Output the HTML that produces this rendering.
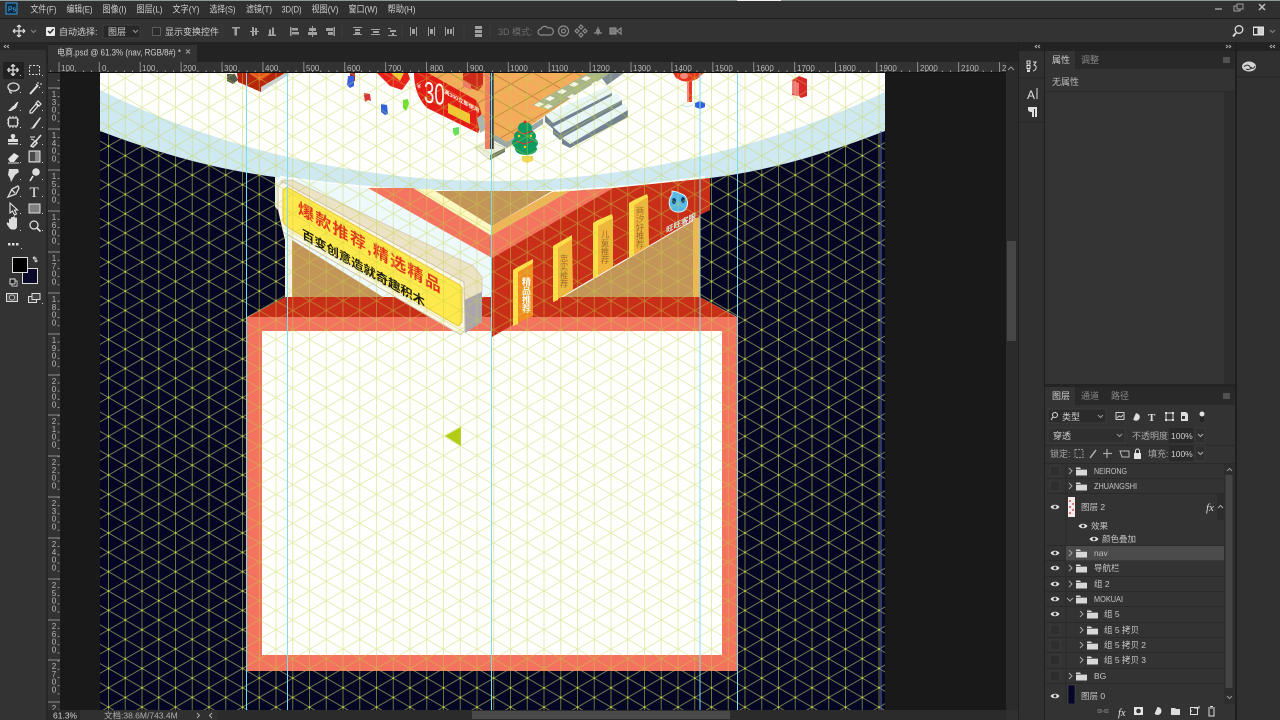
<!DOCTYPE html>
<html lang="zh"><head><meta charset="utf-8"><title>电商.psd</title>
<style>
html,body{margin:0;padding:0;background:#323232;width:1280px;height:720px;overflow:hidden}
svg{display:block;position:absolute;left:0;top:0}
text{font-family:"Liberation Sans","Noto Sans CJK SC",sans-serif;font-size:9px;fill:#cfcfcf}
.m text{font-size:9.5px;fill:#cfcfcf}
.r text{font-size:8px;fill:#b8b8b8}
.l text{font-size:8.5px;fill:#c6c6c6}
.ic{fill:none;stroke:#dcdcdc;stroke-width:1.3}
.fi{fill:#dcdcdc}
.dim{fill:none;stroke:#8c8c8c;stroke-width:1.2}
.al{fill:#a0a0a0}
</style></head><body>
<svg width="1280" height="720" viewBox="0 0 1280 720" xmlns="http://www.w3.org/2000/svg">
<defs>
<pattern id="grid" patternUnits="userSpaceOnUse" width="33.5" height="19.35" patternTransform="translate(108.5 146)">
<path d="M0 0V19.35M16.75 0V19.35M0 0L33.5 19.35M0 19.35L33.5 0M33.5 0V19.35" fill="none" stroke="#c4d444" stroke-width=".95" opacity=".45"/>
</pattern>
<pattern id="gridD" patternUnits="userSpaceOnUse" width="33.5" height="19.35" patternTransform="translate(108.5 146)">
<path d="M0 0L33.5 19.35M0 19.35L33.5 0" fill="none" stroke="#7f8852" stroke-width=".9"/>
<path d="M0 0V19.35M16.75 0V19.35M33.5 0V19.35" fill="none" stroke="#667538" stroke-width="1"/>
<circle cx="16.75" cy="9.67" r="1" fill="#c4d830"/><circle cx="0" cy="0" r="1" fill="#c4d830"/><circle cx="33.5" cy="0" r="1" fill="#c4d830"/><circle cx="0" cy="19.35" r="1" fill="#c4d830"/><circle cx="33.5" cy="19.35" r="1" fill="#c4d830"/>
</pattern>
<pattern id="tile" patternUnits="userSpaceOnUse" width="42" height="24" patternTransform="translate(490 120)">
<path d="M0 0L42 24M0 24L42 0" fill="none" stroke="#c98a3e" stroke-width="1"/>
</pattern>
<pattern id="tickH" patternUnits="userSpaceOnUse" width="8.18" height="10" patternTransform="translate(99.3 62)">
<rect x="0" y="8.6" width="1" height="1.4" fill="#a8a8a8"/>
</pattern>
<pattern id="tickV" patternUnits="userSpaceOnUse" width="12" height="8.18" patternTransform="translate(48 88)">
<rect x="9.8" y="0" width="1.6" height="1" fill="#a8a8a8"/>
</pattern>
<clipPath id="cv"><rect x="100" y="73" width="785" height="637"/></clipPath>
<g id="folder"><path d="M0 1.5h4l1 1.5h6v6.500h-11z" fill="#d8d8d8"/><rect x="0" y="3" width="11" height="1" fill="#6e6e6e"/></g>
<g id="chev"><path d="M0 0l3 3-3 3" fill="none" stroke="#a8a8a8" stroke-width="1"/></g>
<g id="eye"><path d="M-4.500 0C-2.500-3 2.500-3 4.500 0 2.500 3-2.500 3-4.500 0z" fill="#e6e6e6"/><circle r="1.500" fill="#2d2d2d"/></g>
<rect id="nobox" x="-5" y="-5" width="10" height="10" fill="#2e2e2e" stroke="#3b3b3b"/>
</defs>

<!-- shell -->
<rect width="1280" height="720" fill="#323232"/>
<rect width="1280" height="1" fill="#8f9a9c"/>
<rect x="737" width="44" height="1" fill="#f0f0f0"/>
<rect y="1" width="1280" height="17" fill="#303030"/>
<rect y="18" width="1280" height="1" fill="#1e1e1e"/>
<rect y="19" width="1280" height="23" fill="#333"/>
<rect y="42" width="1280" height="20" fill="#232323"/>
<rect x="48" y="45" width="149" height="17" fill="#333"/>
<rect x="0" y="42" width="46" height="678" fill="#333"/>
<rect x="0" y="42" width="48" height="8" fill="#262626"/>
<rect x="46" y="62" width="2" height="658" fill="#262626"/>

<!-- title -->
<rect x="6" y="3" width="11" height="11" fill="#0a2a44" stroke="#3e9bd8"/>
<text x="8" y="11.500" style="font-size:7px;fill:#55b5f0">Ps</text>
<g class="m">
<text x="30.500" y="12.500" textLength="26" lengthAdjust="spacingAndGlyphs">文件(F)</text><text x="66.500" y="12.500" textLength="26" lengthAdjust="spacingAndGlyphs">编辑(E)</text><text x="102.500" y="12.500" textLength="24" lengthAdjust="spacingAndGlyphs">图像(I)</text><text x="136.500" y="12.500" textLength="26" lengthAdjust="spacingAndGlyphs">图层(L)</text><text x="172.500" y="12.500" textLength="27" lengthAdjust="spacingAndGlyphs">文字(Y)</text><text x="209.500" y="12.500" textLength="26" lengthAdjust="spacingAndGlyphs">选择(S)</text><text x="246" y="12.500" textLength="26" lengthAdjust="spacingAndGlyphs">滤镜(T)</text><text x="281.500" y="12.500" textLength="20" lengthAdjust="spacingAndGlyphs">3D(D)</text><text x="311.500" y="12.500" textLength="27" lengthAdjust="spacingAndGlyphs">视图(V)</text><text x="348.500" y="12.500" textLength="29" lengthAdjust="spacingAndGlyphs">窗口(W)</text><text x="387.500" y="12.500" textLength="28" lengthAdjust="spacingAndGlyphs">帮助(H)</text>
</g>
<path d="M1215 9h7" stroke="#9a9a9a" stroke-width="1.500"/>
<rect x="1234" y="6" width="6" height="5" fill="none" stroke="#a0a0a0"/><rect x="1237" y="4" width="6" height="5" fill="#303030" stroke="#a0a0a0"/>
<path d="M1259 4l6 6M1265 4l-6 6" stroke="#bdbdbd" stroke-width="1.500"/>

<!-- options bar -->
<path d="M19 25v12M13 31h12M19 25l-2 2M19 25l2 2M19 37l-2-2M19 37l2-2M13 31l2-2M13 31l2 2M25 31l-2-2M25 31l-2 2" stroke="#e4e4e4" stroke-width="1.200" fill="none"/>
<path d="M31 30l2.500 2.500 2.500-2.500" stroke="#8a8a8a" fill="none"/>
<rect x="46" y="27" width="9" height="9" rx="1" fill="#ececec"/><path d="M48 31l2 2 3.500-4" stroke="#222" stroke-width="1.400" fill="none"/>
<text x="59" y="35">自动选择:</text>
<rect x="103" y="25" width="37" height="13" fill="#282828" stroke="#3c3c3c"/>
<text x="108" y="35">图层</text>
<path d="M133 30l2.500 2.500 2.500-2.500" stroke="#9a9a9a" fill="none"/>
<rect x="152.500" y="27.500" width="8" height="8" fill="#2b2b2b" stroke="#5a5a5a"/>
<text x="165" y="35">显示变换控件</text>
<g class="al">
<path d="M232 27h8v1.500h-3v7h-2.500v-7h-2.500z"/><path d="M250 31h9v1h-9zM252 27h2v9h-2zM255 28h2v7h-2z"/><path d="M268 36h8v-1.500h-2v-7h-2v7h-1v-5h-2v5h-1z"/>
<path d="M290 27h1.500v9H290zM292 28h6v2.500h-6zM292 32h7v2.500h-7z"/><path d="M312 26h1v11h-1zM309 28h7v3h-7zM308 32h9v3h-9z"/><path d="M335 27v9h-1.500v-9zM326 28h7v3h-7zM328 32h5v3h-5z"/>
<path d="M353 27h9v1h-9zM355 29h5v2h-5zM353 34h9v1h-9zM355 32h5v2h-5z"/><path d="M371 29h9v1h-9zM373 31h6v2h-6zM371 34h9v1h-9z"/><path d="M388 35h9v1h-9zM390 30h6v2h-6zM388 28h3v1h-3zM392 33h2v2h-2z"/>
<path d="M410 27h1v9h-1zM416 27h1v9h-1zM412 29h3v5h-3z"/><path d="M428 27h1v9h-1zM434 27h1v9h-1zM430 29h3v5h-3z"/><path d="M445 27h1v9h-1zM453 27h1v9h-1zM447 29h2v5h-2zM450 29h2v5h-2z"/>
<rect x="475" y="26" width="7" height="3"/><rect x="475" y="30" width="7" height="3"/><rect x="475" y="34" width="7" height="3"/>
</g>
<path d="M222 24v14M342 24v14M402 24v14M464 24v14M490 24v14" stroke="#3e3e3e"/>
<text x="498" y="35" style="fill:#6e6e6e">3D 模式:</text>
<g class="dim" stroke="#7a7a7a">
<path d="M541 35a3 3 0 0 1 0-6 4 4 0 0 1 7-1 3.500 3.500 0 0 1 3 7z"/><circle cx="563.500" cy="31" r="5"/><circle cx="563.500" cy="31" r="2"/>
<path d="M581 25l2 2-2 2-2-2zM581 33l2 2-2 2-2-2zM575 31l2-2 2 2-2 2zM587 31l-2-2-2 2 2 2z"/>
<path d="M598 27v8M594 33h8"/><circle cx="598" cy="31" r="1.500"/>
<rect x="610" y="28" width="6" height="6" fill="#7a7a7a"/><path d="M617 31l4-3v6z"/>
</g>
<circle cx="1239" cy="29.500" r="3.800" class="ic" stroke-width="1.500"/><path d="M1236 33l-3 3.500" stroke="#e0e0e0" stroke-width="1.800"/>
<rect x="1253" y="26.500" width="11" height="9" fill="#e0e0e0"/><rect x="1254" y="28" width="3.500" height="6" fill="#2e2e2e"/><rect x="1258.500" y="28" width="4.500" height="6" fill="#d0d0d0"/>
<path d="M1270 30l2.500 2.500 2.500-2.500" stroke="#8a8a8a" fill="none"/>
<path d="M6 45l-2 1.500 2 1.500M9 45l-2 1.500 2 1.500M1037 45l-2 1.500 2 1.500M1040 45l-2 1.500 2 1.500M1226 45l2 1.500-2 1.500M1229 45l2 1.500-2 1.500M1272 45l-2 1.500 2 1.500M1275 45l-2 1.500 2 1.500" stroke="#bbb" fill="none" stroke-width=".8"/>

<!-- doc tab -->
<text x="57" y="55.500" textLength="124" lengthAdjust="spacingAndGlyphs" style="font-size:9px;fill:#d0d0d0">电商.psd @ 61.3% (nav, RGB/8#) *</text>
<path d="M186 49.500l4 4M190 49.500l-4 4" stroke="#a0a0a0"/>

<!-- gutter -->
<rect x="60" y="73" width="946" height="637" fill="#191919"/>

<!-- canvas -->
<g clip-path="url(#cv)">
<rect x="100" y="73" width="785" height="637" fill="#fff"/>
<path d="M100 90C210 145 350 181 492 181C635 181 775 145 885 92V131C775 172 635 191 492 191C350 191 210 172 100 131z" fill="#cfe9f2"/>
<path d="M100 120V142L280 186V165zM885 120V142L705 186V165z" fill="#cfe9f2"/>

<!-- top props -->
<path d="M227 74h8l3 6-5 4-6-3z" fill="#55584a"/>
<path d="M237 73H287L261 92 238 82z" fill="#b8240c"/>
<path d="M249 73H272L260 81z" fill="#e6541c"/>
<path d="M261 92L287 76 290 74 285 73 261 87z" fill="#c8d2d4"/>
<path d="M350 73h5v8h-5z" fill="#a82838"/><path d="M348 76h6v10l-4 2-3-3z" fill="#3a62e0"/>
<path d="M364 93l6 1 1 7-3-1-3 2-1-6z" fill="#d83838"/>
<path d="M381 104l6 1 1 9-3 1-4-3z" fill="#2f62d8"/>
<path d="M403 100l5-1 1 5-3 7-3-3z" fill="#6ce030"/>
<path d="M453 128l6-1v7l-4 2-2-3z" fill="#62e060"/>
<!-- floor -->
<path d="M428 73H607L543 117 507 142 487 130 482 118z" fill="#f4ac5c"/>
<path d="M428 73H607L543 117 507 142 487 130 482 118z" fill="url(#tile)"/>
<path d="M487 130L507 142 543 118 543 124 507 148 487 137z" fill="#98a4a8"/>
<path d="M600 76l10-3h14l-17 12z" fill="#7f8d96"/>
<path d="M588 73H610L603 78 550 110 532 105z" fill="#a9b58c"/>
<path d="M586 76l5 2-5 3-5-2zM574 82l5 2-5 3-5-2zM562 89l5 2-5 3-5-2zM550 96l5 2-5 3-5-2zM539 102l5 2-5 3-5-2zM596 81l5 2-5 3-5-2zM572 94l5 2-5 3-5-2zM548 104l5 2-5 3-5-2z" fill="#f8f8ea"/>
<path d="M545 115L610 85 612 93 553 123z" fill="#e8f6f8"/><path d="M545 115L553 123 612 93 612 98 553 129 545 122z" fill="#728290"/>
<path d="M553 127L617 93 622 100 560 133z" fill="#e8f6f8"/><path d="M553 127L560 133 622 100 622 106 560 140 553 134z" fill="#728290"/>
<path d="M562 138L625 103 628 110 570 144z" fill="#e8f6f8"/><path d="M562 138L570 144 628 110 628 117 570 148 562 144z" fill="#728290"/>
<!-- hanging red -->
<path d="M377 73H408L410 79 402 90 390 86z" fill="#e8201c"/><path d="M391 73h13l-4 8z" fill="#f6c83a"/>
<path d="M414 73H428L476 100Q486 115 478 133L427 108Q414 95 414 73z" fill="#e41b17"/>
<path d="M463 73h20v12l-5 6-15-6z" fill="#cf2a1c"/><path d="M463 80l8 5v5l-8-4z" fill="#f07a68"/>
<text transform="matrix(.62 .1 0 1 424 102)" style="font-size:30px;fill:#fff">30</text>
<text transform="matrix(1 .2 0 1 417 88)" style="font-size:7px;fill:#fff">¥</text>
<text transform="matrix(1 .56 0 1 444 93)" style="font-size:5.300px;fill:#ffe;font-weight:700">满300立即使用</text>
<path d="M448 103L470 114V124L448 113z" fill="#f4c832"/>
<path d="M477 118l5-4 5 15-7 4z" fill="#a8b6b6"/>
<!-- pole -->
<path d="M475 148L490 141 505 148 490 160z" fill="#eceee0" stroke="#d2d8b0"/><path d="M490 155V160L505 152V148z" fill="#6d7a68"/>
<rect x="485" y="73" width="5" height="76" fill="#f07d60"/><rect x="490" y="73" width="4" height="76" fill="#3a3842"/>
<!-- tree -->
<g fill="#0f9a60"><ellipse cx="525" cy="128" rx="7" ry="6"/><ellipse cx="525" cy="136" rx="11" ry="7"/><ellipse cx="525" cy="143" rx="13" ry="7"/><ellipse cx="526" cy="149" rx="11" ry="6"/></g>
<path d="M522 156h11v5l-6 2-5-2z" fill="#f4d858"/>
<path d="M517 131l7 3 8-3M516 141l8 3 9-3" fill="none" stroke="#d83038"/>
<circle cx="525" cy="122" r="1.500" fill="#e03030"/><circle cx="519" cy="136" r="1.200" fill="#f4d020"/><circle cx="531" cy="136" r="1.200" fill="#f4d020"/><circle cx="525" cy="147" r="1.200" fill="#f4d020"/>
<!-- lantern -->
<path d="M673 73h31l-7 6-8 3-7-1-6-3z" fill="#e8341c"/><ellipse cx="684" cy="76" rx="4" ry="3" fill="#f08a7c"/>
<rect x="687" y="81" width="5" height="21" fill="#e83828"/><rect x="687" y="81" width="2" height="21" fill="#f28878"/>
<path d="M695 103l5-2 5 2v4l-5 2-5-2z" fill="#2e62e0"/><path d="M681 105q6 3 12 0" stroke="#bde8e8" fill="none"/>
<!-- red box -->
<path d="M792 80l7-4 8 3v17l-6 2-2-2-7-1z" fill="#d82828"/><path d="M792 80l7 3v13l-7-2z" fill="#f07878"/>

<!-- building -->
<path d="M275 177L368 188 430 190 492 237V338L285 298V215L275 207z" fill="#edf9fc"/>
<path d="M292 240L383 297H292z" fill="#c49559"/>
<path d="M285 205h7v92h-7z" fill="#f5f2e2"/>
<!-- brown top -->
<path d="M432 191H552L492 226z" fill="#c49559"/>
<path d="M413 189H432L492 226V236z" fill="#fdf7c2"/>
<path d="M368 188H413L492 236V258z" fill="#f4745f"/>
<path d="M492 226L552 192 570 191 492 235z" fill="#f0b458"/>
<path d="M492 235L570 191 613 188 492 258z" fill="#f4745f"/>
<!-- below wall -->
<path d="M563 297L693 221 700 215V297z" fill="#c49559"/>
<path d="M693 218h7v79h-7z" fill="#f0b458"/>
<!-- frame -->
<rect x="247" y="317" width="490" height="354" fill="#f4735e"/>
<path d="M285 297H700L737 317.500H247z" fill="#c92f18"/>
<rect x="262" y="331" width="460" height="324" fill="#fff"/>
<path d="M247 317H737V318H247z" fill="#f4735e"/>
<!-- wall -->
<path d="M492 258L613 188 710 178V210L492 337z" fill="#c92f18"/>
<!-- wall signs -->
<path d="M513 270L533 263 533 316 513 325z" fill="#f08d20"/><path d="M513 270L518 267 533 259 533 263 518 272V324L513 326z" fill="#ffe04a"/>
<path d="M553 246L572 238 573 290 553 302z" fill="#f2b43a"/><path d="M553 246L558 243 572 235 572 239 558 248V300L553 302z" fill="#ffe04a"/>
<path d="M593 223L613 217 613 267 593 278z" fill="#f2b43a"/><path d="M593 223L598 220 612 214 613 218 598 226V276L593 279z" fill="#ffe04a"/>
<path d="M629 203L648 196 649 246 629 258z" fill="#f2b43a"/><path d="M629 203L634 200 647 194 648 197 634 205V255L629 258z" fill="#ffe04a"/>
<text x="526" y="277" style="font-size:9px;fill:#fff;writing-mode:vertical-rl;font-weight:700">精品推荐</text>
<text x="564" y="254" style="font-size:8.500px;fill:#9c6a26;writing-mode:vertical-rl">忠实推荐</text>
<text x="605" y="230" style="font-size:8.500px;fill:#9c6a26;writing-mode:vertical-rl">儿童推荐</text>
<text x="640" y="206" style="font-size:8.500px;fill:#9c6a26;writing-mode:vertical-rl">商汐好推荐</text>
<!-- mascot -->
<path d="M672 191l5 1 7 3c4 4 5 10 1 15-4 3-11 3-14-1-3-5-2-11 1-14z" fill="#54b8ec" stroke="#dff3fb"/>
<ellipse cx="674" cy="201" rx="2" ry="3" fill="#113d6b"/><ellipse cx="683" cy="200" rx="2" ry="3" fill="#113d6b"/>
<text transform="matrix(1 -.5 0 1 666 233)" style="font-size:7.500px;fill:#d8f0f8;font-weight:700">旺旺客服</text>

<!-- signboard -->
<path d="M281 181L292 180 473 266 482 277V292L465 300 462 283 285 186z" fill="#ece3c6" stroke="#d9cfb8" stroke-linejoin="round"/>
<path d="M465 300L482 292V322L465 333z" fill="#aba6ab"/>
<path d="M283 182L464 282 465 330 461 335 283 232 278 224V186z" fill="#fbf8e6" stroke="#cfc4b0" stroke-linejoin="round"/>
<path d="M287 187L460 285 462 288V322L458 326 287 227 283 222V190z" fill="#ffe94c" stroke="#e7c343" stroke-linejoin="round"/>
<text transform="matrix(1 .56 0 1 298 213)" style="font-size:16px;font-weight:700;fill:#e2361a;letter-spacing:1.300px">爆款推荐,精选精品</text>
<text transform="matrix(1 .56 0 1 302 238)" style="font-size:12.300px;font-weight:700;fill:#1a1a10">百变创意造就奇趣积木</text>

<!-- arrow -->
<path d="M445 436L461 427V446z" fill="#b4cc16"/>

<!-- light grid -->
<rect x="100" y="73" width="785" height="637" fill="url(#grid)"/>
<!-- dark background + dark grid -->
<path d="M100 131C160 154 218 170 275 177V207L278 210 283 232 285 240V297L247 317V671H737V317L700 297V215L710 210V178C768 171 826 154 885 131V710H100z" fill="#050524"/>
<path d="M100 131C160 154 218 170 275 177V207L278 210 283 232 285 240V297L247 317V671H737V317L700 297V215L710 210V178C768 171 826 154 885 131V710H100z" fill="url(#gridD)"/>
<path d="M246.500 73V710M287.500 73V710M491.500 73V710M700 73V710M737.500 73V710" stroke="#7fdcec" stroke-width="1"/>
<path d="M881 131V710" stroke="#5a6ca8" stroke-width="1"/>
</g>

<!-- rulers -->
<rect x="48" y="62" width="958" height="11" fill="#323232"/>
<rect x="48" y="62" width="958" height="10" fill="url(#tickH)"/>
<rect x="48" y="72" width="958" height="1" fill="#111"/>
<path d="M59 62v10M99.300 62v10M140.200 62v10M181.100 62v10M222 62v10M262.900 62v10M303.800 62v10M344.700 62v10M385.600 62v10M426.500 62v10M467.400 62v10M508.300 62v10M549.200 62v10M590.100 62v10M631 62v10M671.900 62v10M712.800 62v10M753.700 62v10M794.600 62v10M835.500 62v10M876.700 62v10M917.600 62v10M958.600 62v10M999.500 62v10" stroke="#8c8c8c"/>
<g class="r">
<text x="61" y="71">100</text><text x="102" y="71">0</text><text x="142" y="71">100</text><text x="183" y="71">200</text><text x="224" y="71">300</text><text x="265" y="71">400</text><text x="306" y="71">500</text><text x="347" y="71">600</text><text x="388" y="71">700</text><text x="430" y="71" >800</text><text x="470" y="71">900</text><text x="510" y="71">1000</text><text x="551" y="71">1100</text><text x="592" y="71">1200</text><text x="633" y="71">1300</text><text x="674" y="71">1400</text><text x="715" y="71">1500</text><text x="756" y="71">1600</text><text x="797" y="71">1700</text><text x="838" y="71">1800</text><text x="879" y="71">1900</text><text x="920" y="71">2000</text><text x="961" y="71">2100</text><text x="1002" y="71">2</text>
</g>
<rect x="48" y="73" width="12" height="637" fill="#323232"/>
<rect x="48" y="73" width="12" height="637" fill="url(#tickV)"/>
<path d="M48 88h12M48 129h12M48 170h12M48 211h12M48 252h12M48 293h12M48 334h12M48 375h12M48 415h12M48 456h12M48 497h12M48 538h12M48 579h12M48 620h12M48 660h12M48 702h12" stroke="#8c8c8c"/>
<g class="r" style="writing-mode:vertical-rl;text-orientation:upright">
<text x="54" y="90" style="letter-spacing:-1.200px">1300</text><text x="54" y="131" style="letter-spacing:-1.200px">1400</text><text x="54" y="172" style="letter-spacing:-1.200px">1500</text><text x="54" y="213" style="letter-spacing:-1.200px">1600</text><text x="54" y="254" style="letter-spacing:-1.200px">1700</text><text x="54" y="295" style="letter-spacing:-1.200px">1800</text><text x="54" y="336" style="letter-spacing:-1.200px">1900</text><text x="54" y="377" style="letter-spacing:-1.200px">2000</text><text x="54" y="417" style="letter-spacing:-1.200px">2100</text><text x="54" y="458" style="letter-spacing:-1.200px">2200</text><text x="54" y="499" style="letter-spacing:-1.200px">2300</text><text x="54" y="540" style="letter-spacing:-1.200px">2400</text><text x="54" y="581" style="letter-spacing:-1.200px">2500</text><text x="54" y="622" style="letter-spacing:-1.200px">2600</text><text x="54" y="662" style="letter-spacing:-1.200px">2700</text><text x="54" y="704" style="letter-spacing:-1.200px">2</text>
</g>

<!-- toolbar -->
<rect x="3" y="62" width="21" height="17" fill="#212121"/>
<path d="M13 64.500v11M7.500 70h11M13 64.500l-2 2M13 64.500l2 2M13 75.500l-2-2M13 75.500l2-2M7.500 70l2-2M7.500 70l2 2M18.500 70l-2-2M18.500 70l-2 2" class="ic"/>
<rect x="29.500" y="65.500" width="10" height="9" fill="none" stroke="#dcdcdc" stroke-dasharray="2 1.500"/>
<ellipse cx="13.500" cy="87" rx="5.500" ry="4" class="ic"/><path d="M10 90q-1 3 2 3" class="ic"/>
<path d="M30 94l8-9" stroke="#e4e4e4" stroke-width="2"/><path d="M38 82v2M40 84h2M36 84l1 1M39 87l1 1" stroke="#e4e4e4"/>
<path d="M8 111l5-5 5-3-2 5-5 3z" class="fi"/><path d="M18 102l-3 3" stroke="#fff"/>
<path d="M30 111l6-7 2 2-6 7-2 0zM36 103l2-2 3 3-2 2z" fill="none" stroke="#e4e4e4" stroke-width="1.200"/>
<rect x="8.500" y="118" width="9" height="8" rx="1" class="ic"/><path d="M10 116v2M13 116v2M16 116v2M10 126v2M13 126v2M16 126v2M7 120h1M7 123h1M18 120h1M18 123h1" stroke="#dcdcdc"/>
<path d="M30 128c2 0 3-1 3-2l7-9 1 1-6 9c-1 2-3 2-5 1z" class="fi"/>
<path d="M13 134a2 2 0 0 1 2 3l-1 2h4v3H8v-3h4l-1-2a2 2 0 0 1 2-3zM8 143h10v1.500H8z" class="fi"/>
<path d="M31 146l4-5 2 2-4 4zM36 141l5-6" stroke="#e4e4e4" stroke-width="1.500" fill="none"/><path d="M30 137h5M31 139l3 1" stroke="#e4e4e4"/>
<path d="M8 159l6-6 5 3-5 6H10z" fill="#e4e4e4"/><path d="M8 163h11" stroke="#ddd"/>
<rect x="29" y="151" width="11" height="11" fill="#8a8a8a" stroke="#ddd"/><rect x="30" y="152" width="5" height="9" fill="#333" opacity=".75"/>
<path d="M9 169h9l1 3-4 3-4 7-1-4-2-3z" class="fi"/>
<circle cx="36" cy="172" r="3.800" class="fi"/><path d="M33 176l-3 5" stroke="#e4e4e4" stroke-width="1.600"/>
<path d="M8 197l4-8 6-3 1 2-3 6-8 3zM12 190l3 3" class="ic"/>
<text x="29.500" y="197" style="font-family:'Liberation Serif',serif;font-size:15px;fill:#eee">T</text>
<path d="M10 203l0 10 2.500-2 2 4 2-1-2-4h3z" fill="none" stroke="#e4e4e4" stroke-width="1.100"/>
<rect x="29" y="204" width="11" height="9" fill="#7f7f7f" stroke="#ddd"/>
<path d="M9 224v-4c0-2 2-2 2 0v-2c0-1.500 2-1.500 2 0v-.500c0-1.500 2-1.500 2 0v1c0-1.500 2-1.500 2 0v7c0 3-1 4-3 4h-2c-2 0-3-2-5-5-1-2 1-3 2-1z" class="fi"/>
<circle cx="34" cy="225" r="4" class="ic"/><path d="M37 228l3.500 3.500" stroke="#e4e4e4" stroke-width="1.600"/>
<path d="M8 243h2.500v2.500H8zM12 243h2.500v2.500H12zM16 243h2.500v2.500H16z" fill="#ddd"/>
<g fill="#cfcfcf"><rect x="20" y="75" width="1" height="1"/><rect x="42" y="75" width="1" height="1"/><rect x="20" y="92" width="1" height="1"/><rect x="42" y="92" width="1" height="1"/><rect x="20" y="110" width="1" height="1"/><rect x="42" y="110" width="1" height="1"/><rect x="20" y="127" width="1" height="1"/><rect x="42" y="127" width="1" height="1"/><rect x="20" y="144" width="1" height="1"/><rect x="42" y="144" width="1" height="1"/><rect x="20" y="162" width="1" height="1"/><rect x="42" y="162" width="1" height="1"/><rect x="20" y="179" width="1" height="1"/><rect x="42" y="179" width="1" height="1"/><rect x="20" y="196" width="1" height="1"/><rect x="42" y="196" width="1" height="1"/><rect x="20" y="213" width="1" height="1"/><rect x="42" y="213" width="1" height="1"/><rect x="20" y="230" width="1" height="1"/><rect x="42" y="230" width="1" height="1"/><rect x="21" y="248" width="1" height="1"/><rect x="42" y="303" width="1" height="1"/></g>
<rect x="22.500" y="268.500" width="15" height="15" fill="#0a0a28" stroke="#dcdcdc"/>
<rect x="12.500" y="257.500" width="15" height="15" fill="#000" stroke="#dcdcdc"/>
<path d="M33 258h3v4M33 258l1.500-1.500M33 258l1.500 1.500M36 262l-1.500-1.500M36 262l1.500-1.500" stroke="#ddd" fill="none"/>
<rect x="12" y="281" width="5" height="5" fill="#000" stroke="#ccc"/><rect x="10" y="279" width="5" height="5" fill="#222" stroke="#ddd"/>
<rect x="6.500" y="293.500" width="11" height="8" fill="#555" stroke="#ddd"/><circle cx="12" cy="297.500" r="2.500" fill="#333" stroke="#bbb"/>
<rect x="28.500" y="296.500" width="8" height="6" fill="#444" stroke="#ddd"/><rect x="32" y="293.500" width="8" height="6" fill="#444" stroke="#ddd"/>

<!-- scrollbars + status -->
<rect x="1006" y="62" width="12" height="658" fill="#2b2b2b"/>
<path d="M1008 70l3-3 3 3" stroke="#999" fill="none"/>
<rect x="1007" y="241" width="9" height="100" fill="#474747"/>
<rect x="48" y="710" width="970" height="10" fill="#303030"/>
<rect x="48" y="710" width="32" height="10" fill="#2a2a2a"/>
<text x="53" y="718.500" style="font-size:8.500px;fill:#d4d4d4">61.3%</text>
<text x="104" y="718.500" style="font-size:8.500px;fill:#b0b0b0">文档:38.6M/743.4M</text>
<path d="M197 713l2.500 2.500-2.500 2.500M212 713l-2.500 2.500 2.500 2.500" stroke="#aaa" fill="none"/>
<rect x="218" y="710" width="788" height="10" fill="#2b2b2b"/>
<rect x="472" y="711" width="258" height="8" fill="#4a4a4a"/>

<!-- dock -->
<rect x="1018" y="42" width="1" height="678" fill="#1f1f1f"/>
<rect x="1019" y="51" width="25" height="669" fill="#303030"/>
<rect x="1044" y="42" width="1" height="678" fill="#1f1f1f"/>
<path d="M1019 78h25M1019 122h25" stroke="#262626"/>
<rect x="1027" y="61" width="3" height="3" fill="none" stroke="#ddd"/><rect x="1027" y="65.500" width="3" height="3" fill="none" stroke="#ddd"/><rect x="1027" y="69.500" width="3" height="2.500" fill="#ddd"/>
<path d="M1033 62h3l-2 3c3 0 3 5-1 6" stroke="#ddd" fill="none"/>
<text x="1027" y="99" style="font-size:12px;fill:#e0e0e0">A</text><path d="M1037 88v11" stroke="#ddd"/>
<path d="M1028 107h9v10h-2v-8h-1v8h-2v-5c-3 0-4-1-4-3z" fill="#e0e0e0"/>
<!-- properties -->
<rect x="1045" y="51" width="190" height="18" fill="#292929"/>
<rect x="1045" y="51" width="30" height="18" fill="#333"/>
<text x="1052" y="63">属性</text><text x="1081" y="63" style="fill:#888">调整</text>
<path d="M1223 58h7M1223 60h7M1223 62h7" stroke="#777"/>
<rect x="1045" y="69" width="190" height="22" fill="#333"/>
<text x="1052" y="85" style="fill:#bdbdbd">无属性</text>
<rect x="1045" y="91" width="190" height="1" fill="#2a2a2a"/>
<rect x="1045" y="92" width="179" height="292" fill="#343434"/>
<rect x="1224" y="92" width="11" height="292" fill="#2d2d2d"/>
<rect x="1235" y="42" width="2" height="678" fill="#1f1f1f"/>
<rect x="1237" y="51" width="43" height="669" fill="#303030"/>
<path d="M1237 77h43" stroke="#262626"/>
<ellipse cx="1249" cy="66.500" rx="7" ry="5" fill="#d4d4d4"/><path d="M1244 67c2-3 5-2 6 0s4 2 5-1M1246 69c2 1 4 1 6-2" stroke="#333" fill="none"/>

<!-- layers panel -->
<rect x="1045" y="384" width="190" height="3" fill="#242424"/>
<rect x="1045" y="387" width="190" height="18" fill="#292929"/>
<rect x="1045" y="387" width="30" height="18" fill="#333"/>
<text x="1052" y="399">图层</text><text x="1081" y="399" style="fill:#8a8a8a">通道</text><text x="1111" y="399" style="fill:#8a8a8a">路径</text>
<path d="M1223 394h7M1223 396h7M1223 398h7" stroke="#777"/>
<rect x="1045" y="405" width="190" height="315" fill="#333"/>
<rect x="1048" y="409" width="58" height="14" fill="#2b2b2b" stroke="#3b3b3b"/>
<circle cx="1055" cy="415" r="2.500" fill="none" stroke="#ddd"/><path d="M1053 417l-2 3" stroke="#ddd"/>
<text x="1062" y="420">类型</text>
<path d="M1098 415l2.500 2.500 2.500-2.500" stroke="#999" fill="none"/>
<rect x="1116" y="412.500" width="8" height="7" fill="none" stroke="#ccc"/><path d="M1117 418l2-2 2 1 2-2" stroke="#ccc" fill="none"/>
<circle cx="1136" cy="417" r="3.800" fill="#ddd"/><path d="M1136 413a4 4 0 0 0-3 7z" fill="#333"/>
<text x="1148" y="421" style="font-family:'Liberation Serif',serif;font-size:11px;fill:#e0e0e0;font-weight:700">T</text>
<rect x="1166" y="413" width="7" height="7" fill="none" stroke="#ddd"/><path d="M1165 412h2v2h-2zM1172 412h2v2h-2zM1165 419h2v2h-2zM1172 419h2v2h-2z" fill="#ddd"/>
<path d="M1181 412h5l2 2v7h-7z" fill="#ddd"/><rect x="1182" y="416" width="3" height="3" fill="#333"/>
<rect x="1200" y="412" width="4" height="10" rx="2" fill="#232323"/><circle cx="1202" cy="414" r="2.500" fill="#e0e0e0"/>

<rect x="1048" y="428" width="77" height="15" fill="#2f2f2f" stroke="#3b3b3b"/>
<text x="1053" y="439">穿透</text>
<path d="M1117 434l2.500 2.500 2.500-2.500" stroke="#999" fill="none"/>
<text x="1132" y="439" style="fill:#a8a8a8">不透明度:</text>
<rect x="1169" y="428" width="25" height="15" fill="#2a2a2a"/><text x="1171" y="439" style="font-size:8.500px">100%</text>
<rect x="1195" y="428" width="10" height="15" fill="#2f2f2f" stroke="#3b3b3b"/><path d="M1198 434l2.500 2.500 2.500-2.500" stroke="#aaa" fill="none"/>
<path d="M1045 445.500h190M1045 463.500h190" stroke="#2a2a2a"/>
<text x="1050" y="457" style="fill:#a8a8a8">锁定:</text>
<rect x="1075" y="449.500" width="8" height="8" fill="none" stroke="#999" stroke-dasharray="2 1"/>
<path d="M1090 458l6-8" stroke="#aaa" stroke-width="1.500"/>
<path d="M1107 449v9M1103 453.500h9" stroke="#aaa" stroke-width="1.200"/>
<path d="M1120 451h9v6h-7z" fill="none" stroke="#bbb"/>
<rect x="1134" y="453" width="7" height="6" fill="#e4e4e4"/><path d="M1135.500 453v-2a2 2 0 0 1 4 0v2" stroke="#e4e4e4" fill="none"/>
<text x="1148" y="457" style="fill:#a8a8a8">填充:</text>
<rect x="1169" y="446" width="25" height="15" fill="#2a2a2a"/><text x="1171" y="457" style="font-size:8.500px">100%</text>
<rect x="1195" y="446" width="10" height="15" fill="#2f2f2f" stroke="#3b3b3b"/><path d="M1198 452l2.500 2.500 2.500-2.500" stroke="#aaa" fill="none"/>

<!-- layer rows -->
<g stroke="#2a2a2a">
<path d="M1046 478.500h178M1046 493.500h178M1046 545.500h178M1046 560.500h178M1046 576.500h178M1046 591.500h178M1046 606.500h178M1046 622.500h178M1046 637.500h178M1046 652.500h178M1046 668.500h178M1046 683.500h178M1066 464v240"/>
</g>
<rect x="1066" y="546" width="158" height="14.500" fill="#4b4b4b"/>
<use href="#nobox" x="1055" y="471"/><use href="#nobox" x="1055" y="486"/><use href="#nobox" x="1055" y="630"/><use href="#nobox" x="1055" y="645"/><use href="#nobox" x="1055" y="660"/><use href="#nobox" x="1055" y="676"/>
<use href="#eye" x="1055" y="507"/><use href="#eye" x="1055" y="553"/><use href="#eye" x="1055" y="568"/><use href="#eye" x="1055" y="584"/><use href="#eye" x="1055" y="599"/><use href="#eye" x="1055" y="614"/><use href="#eye" x="1055" y="696"/>
<use href="#eye" x="1083" y="526"/><use href="#eye" x="1094" y="539"/>
<use href="#chev" x="1069" y="468"/><use href="#chev" x="1069" y="483"/><use href="#chev" x="1069" y="550"/><use href="#chev" x="1069" y="565"/><use href="#chev" x="1069" y="581"/>
<path d="M1067 598l3 3 3-3" stroke="#a8a8a8" fill="none"/>
<use href="#chev" x="1080" y="611"/><use href="#chev" x="1080" y="627"/><use href="#chev" x="1080" y="642"/><use href="#chev" x="1080" y="657"/><use href="#chev" x="1069" y="673"/>
<use href="#folder" x="1076" y="466"/><use href="#folder" x="1076" y="481"/><use href="#folder" x="1076" y="548"/><use href="#folder" x="1076" y="563"/><use href="#folder" x="1076" y="579"/><use href="#folder" x="1076" y="594"/>
<use href="#folder" x="1087" y="609"/><use href="#folder" x="1087" y="625"/><use href="#folder" x="1087" y="640"/><use href="#folder" x="1087" y="655"/><use href="#folder" x="1076" y="671"/>
<rect x="1068" y="497" width="7" height="20" fill="#f6e9ec"/><path d="M1069 500h2v2h-2zM1072 503h2v2h-2zM1069 506h2v2h-2zM1072 509h2v2h-2zM1069 512h2v2h-2z" fill="#d67b7b"/>
<rect x="1068" y="685" width="7" height="19" fill="#06062a" stroke="#555" stroke-width=".5"/>
<g class="l">
<text x="1094" y="474" textLength="33" lengthAdjust="spacingAndGlyphs">NEIRONG</text>
<text x="1094" y="489" textLength="43" lengthAdjust="spacingAndGlyphs">ZHUANGSHI</text>
<text x="1081" y="510">图层 2</text>
<text x="1091" y="529">效果</text>
<text x="1102" y="542">颜色叠加</text>
<text x="1094" y="556" style="fill:#c0c0c0">nav</text>
<text x="1094" y="571">导航栏</text>
<text x="1094" y="587">组 2</text>
<text x="1094" y="602" textLength="29" lengthAdjust="spacingAndGlyphs">MOKUAI</text>
<text x="1104" y="617">组 5</text>
<text x="1104" y="633">组 5 拷贝</text>
<text x="1104" y="648">组 5 拷贝 2</text>
<text x="1104" y="663">组 5 拷贝 3</text>
<text x="1094" y="679">BG</text>
<text x="1081" y="699">图层 0</text>
</g>
<text x="1206" y="511" style="font-family:'Liberation Serif',serif;font-style:italic;font-size:11px;fill:#dcdcdc">fx</text>
<rect x="1217" y="494" width="7" height="26" fill="#2c2c2c"/>
<path d="M1218 508l2.500-2.500 2.500 2.500" stroke="#aaa" fill="none"/>
<!-- layer scrollbar -->
<rect x="1224" y="464" width="11" height="240" fill="#2d2d2d"/>
<rect x="1225.500" y="475" width="7" height="213" fill="#454545"/>
<path d="M1227 471l2.500-2.500 2.500 2.500M1227 696l2.500 2.500 2.500-2.500" stroke="#999" fill="none"/>
<!-- layer footer -->
<rect x="1045" y="704" width="190" height="16" fill="#333"/>
<path d="M1099 711h8M1098 709.500h3v3h-3zM1105 709.500h3v3h-3z" stroke="#666" fill="none"/>
<text x="1118" y="716" style="font-family:'Liberation Serif',serif;font-style:italic;font-size:10.500px;fill:#e0e0e0">fx</text>
<rect x="1134" y="707" width="9" height="8" fill="#e4e4e4"/><circle cx="1138.500" cy="711" r="2.300" fill="#333"/>
<circle cx="1157.500" cy="711" r="4" fill="#e0e0e0"/><path d="M1157.500 707a4 4 0 0 0-3 7z" fill="#333"/>
<path d="M1171 708h4l1 1h4v6h-9z" fill="#dcdcdc"/>
<rect x="1190.500" y="707.500" width="7" height="7" fill="none" stroke="#ddd"/><path d="M1194 708h5v-2M1190 711h2" stroke="#ddd" fill="none"/>
<path d="M1208 708h7M1209 709v7h5v-7M1210 706.500h3" stroke="#ddd" fill="none"/>
</svg>
</body></html>
